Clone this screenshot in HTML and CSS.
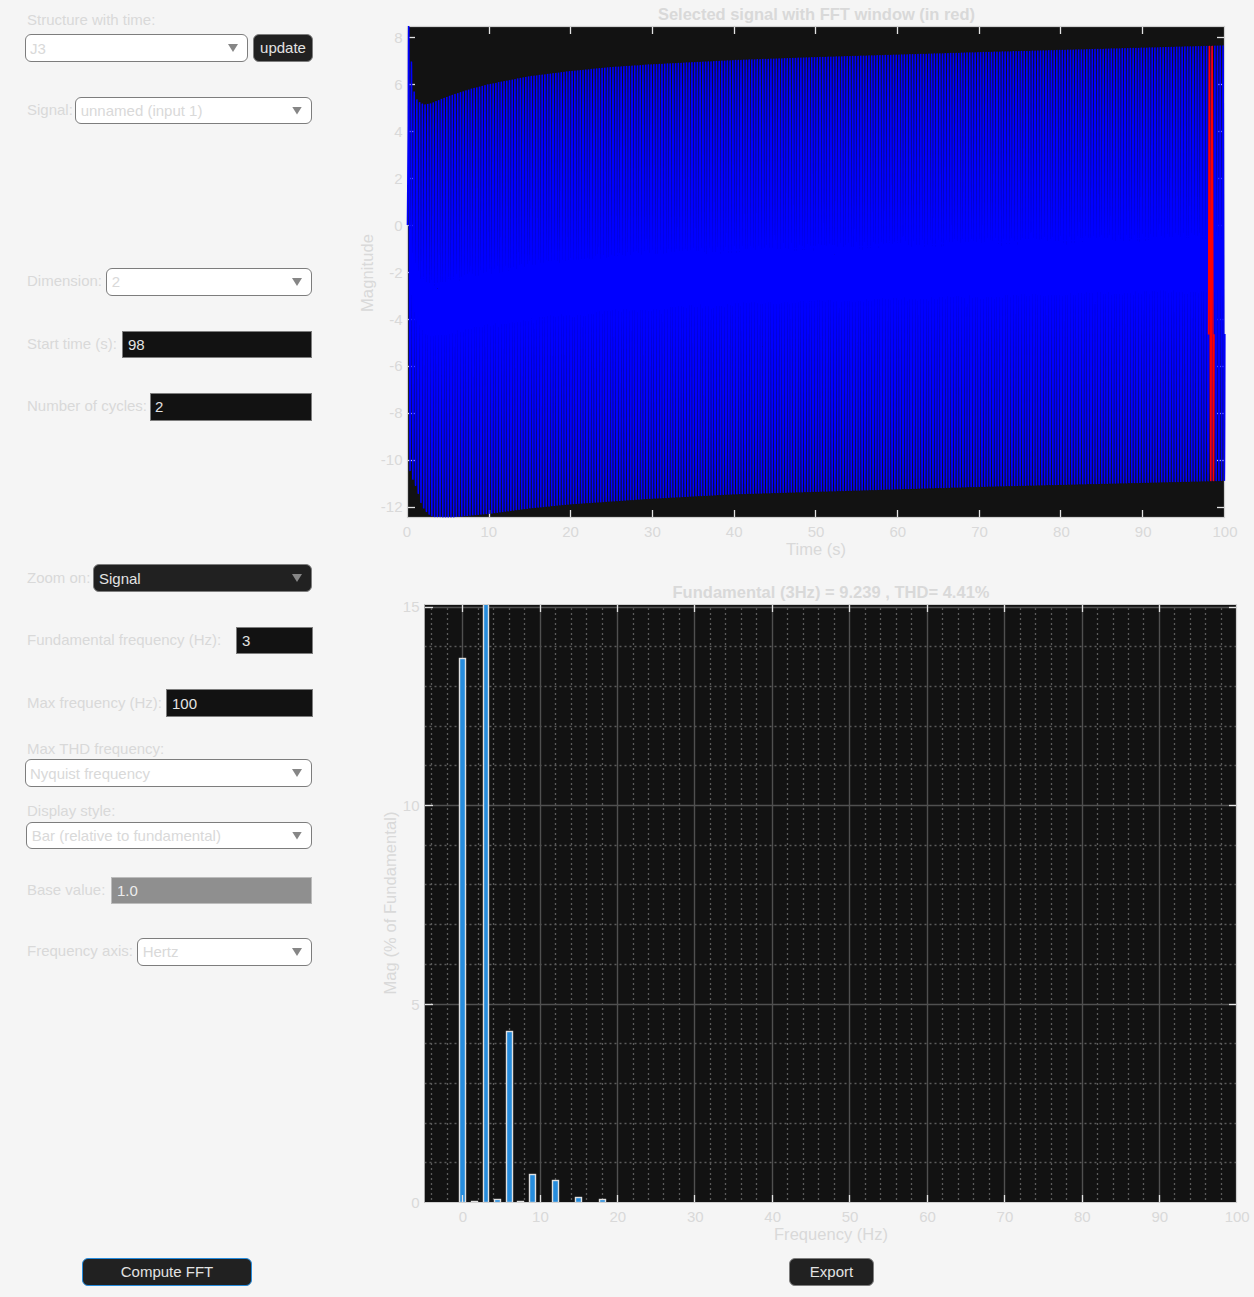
FILE: index.html
```html
<!DOCTYPE html>
<html lang="en">
<head>
<meta charset="utf-8">
<title>FFT Analysis</title>
<link rel="stylesheet" href="styles.css">
</head>
<body>
<div class="app">
  <form class="panel">
    <div class="caption caption-structure">Structure with time:</div>
    <div class="row row-structure">
      <div class="select"><span>J3</span><i class="arrow"></i></div>
      <button type="button" class="btn btn-update">update</button>
    </div>
    <div class="row row-signal"><label>Signal:</label><div class="select"><span>unnamed (input 1)</span><i class="arrow"></i></div></div>
    <div class="row row-dimension"><label>Dimension:</label><div class="select"><span>2</span><i class="arrow"></i></div></div>
    <div class="row row-start"><label>Start time (s):</label><div class="field">98</div></div>
    <div class="row row-cycles"><label>Number of cycles:</label><div class="field">2</div></div>
    <div class="row row-zoom"><label>Zoom on:</label><div class="select dark"><span>Signal</span><i class="arrow"></i></div></div>
    <div class="row row-fund wide"><label>Fundamental frequency (Hz):</label><div class="field">3</div></div>
    <div class="row row-max wide"><label>Max frequency (Hz):</label><div class="field">100</div></div>
    <div class="caption caption-thd">Max THD frequency:</div>
    <div class="row row-thd"><div class="select"><span>Nyquist frequency</span><i class="arrow"></i></div></div>
    <div class="caption caption-style">Display style:</div>
    <div class="row row-style"><div class="select"><span>Bar (relative to fundamental)</span><i class="arrow"></i></div></div>
    <div class="row row-base"><label>Base value:</label><div class="field disabled">1.0</div></div>
    <div class="row row-axis"><label>Frequency axis:</label><div class="select"><span>Hertz</span><i class="arrow"></i></div></div>
    <button type="button" class="btn btn-compute">Compute FFT</button>
  </form>
  <main class="plots">
    <svg class="plot" id="signal" width="914" height="570" viewBox="340 0 914 570"></svg>
    <svg class="plot" id="spectrum" width="914" height="688" viewBox="340 570 914 688"></svg>
    <button type="button" class="btn btn-export">Export</button>
  </main>
</div>
<script src="plots.js"></script>
</body>
</html>
```
FILE: styles.css
```css
* { box-sizing: border-box; }
body {
  margin: 0;
  background: #f5f5f5;
  font: 15px/18px "Liberation Sans", Arial, sans-serif;
  color: #d9d9d9;
}
.app {
  display: grid;
  grid-template-columns: 340px 914px;
  width: 1254px;
  height: 1297px;
  overflow: hidden;
}
.panel {
  display: flex;
  flex-direction: column;
  padding: 11px 28px 0 25px;
}
.caption { padding-left: 2px; height: 18px; white-space: nowrap; }
.row {
  display: flex;
  align-items: stretch;
  justify-content: space-between;
  width: 287px;
  height: 28px;
}
.row.wide { width: 288px; }
.row label { padding-left: 2px; line-height: 26px; white-space: nowrap; }
.select, .field {
  display: flex;
  align-items: center;
  border: 1px solid #7d7d7d;
  padding: 1px 9px 0 4.7px;
  white-space: nowrap;
}
.select { justify-content: space-between; background: #fff; border-radius: 6px; }
.select.dark { background: #212121; color: #e3e3e3; padding-left: 5px; }
.field { background: #121212; color: #e3e3e3; padding-left: 5px; }
.field.disabled { background: #8f8f8f; border-color: #bcbcbc; color: #ececec; }
.arrow {
  width: 10px;
  height: 8px;
  margin-bottom: 1px;
  background: #868686;
  clip-path: polygon(0 0, 100% 0, 50% 100%);
}
.btn {
  height: 28px;
  padding: 0;
  border: 1px solid #7d7d7d;
  border-radius: 6px;
  background: #212121;
  color: #e3e3e3;
  font: inherit;
}
.row-structure { margin-top: 5px; width: 288px; }
.row-structure .select { width: 223px; padding-left: 4px; }
.btn-update { width: 60px; }
.row-signal { margin-top: 35px; height: 27px; }
.row-signal .select { width: 237px; }
.row-dimension { margin-top: 144px; }
.row-dimension .select { width: 206px; }
.row-dimension span, .row-axis span { margin-bottom: 2px; }
.row-start { margin-top: 35px; height: 27px; }
.row-start .field { width: 190px; }
.row-cycles { margin-top: 35px; }
.row-cycles .field { width: 162px; padding: 0 0 1px 4px; }
.row-zoom { margin-top: 143px; }
.row-zoom .select { width: 219px; }
.row-zoom label, .row-max label { line-height: 28px; }
.row-fund { margin-top: 35px; height: 27px; }
.row-fund .field { width: 77px; }
.row-max { margin-top: 35px; }
.row-max .field { width: 147px; }
.caption-thd { margin-top: 23px; }
.row-thd { margin-top: 1px; }
.row-thd .select { width: 287px; padding-left: 4px; }
.caption-style { margin-top: 15px; }
.row-style { margin-top: 2px; height: 27px; justify-content: flex-end; }
.row-style .select { width: 286px; }
.row-base { margin-top: 28px; height: 27px; }
.row-base .field { width: 201px; }
.row-axis { margin-top: 34px; }
.row-axis .select { width: 175px; }
.btn-compute { width: 170px; margin: 292px 0 0 57px; border-color: #268cdd; }
.plots { display: flex; flex-direction: column; }
.plot { display: block; font-family: "Liberation Sans", Arial, sans-serif; }
.btn-export { width: 85px; margin-left: 449px; }
.face { fill: #121212; }
.box { fill: none; stroke: #d0d0d0; stroke-width: 1.2; }
.side { stroke: #a8a8a8; stroke-width: 1; }
.tick { stroke: #e3e3e3; stroke-width: 1.3; fill: none; }
.grid { stroke: #505050; stroke-width: 1.4; }
.minor { stroke: #5a5a5a; stroke-width: 1.3; stroke-dasharray: 2 3; }
.wave { fill: none; stroke: #00f; stroke-width: 1.45; stroke-linejoin: bevel; }
.wave.window { stroke: #f00; }
.bar { fill: #268cdd; stroke: #e0e0e0; stroke-width: 1.4; }
.num { font-size: 15px; fill: #d9d9d9; }
.axis { font-size: 16.5px; fill: #d9d9d9; }
.title { font-size: 16.5px; font-weight: bold; fill: #d9d9d9; }
.mid { text-anchor: middle; }
.end { text-anchor: end; }
```
FILE: plots.js
```js
const NS = "http://www.w3.org/2000/svg";

function add(parent, name, attrs, text) {
  const el = document.createElementNS(NS, name);
  for (const key in attrs) el.setAttribute(key, attrs[key]);
  if (text !== undefined) el.textContent = text;
  parent.appendChild(el);
  return el;
}
function line(parent, cls, x1, y1, x2, y2) {
  add(parent, "line", { class: cls, x1, y1, x2, y2 });
}
const snap = v => Math.floor(v) + 0.5;

function interpolate(points, x) {
  if (x <= points[0][0]) return points[0][1];
  for (let i = 1; i < points.length; i++) {
    const [x1, y1] = points[i];
    if (x <= x1) {
      const [x0, y0] = points[i - 1];
      return y0 + (y1 - y0) * (x - x0) / (x1 - x0);
    }
  }
  return points[points.length - 1][1];
}

/* Time-domain signal */
function drawSignal() {
  const svg = document.getElementById("signal");
  const L = 407.5, R = 1224.5, T = 26.5, B = 517.5;
  const clip = add(add(svg, "defs", {}), "clipPath", { id: "axes1" });
  add(clip, "rect", { x: 406, y: 26, width: 820, height: 492 });
  add(svg, "rect", { class: "face", x: L, y: T, width: R - L, height: B - T });
  add(svg, "rect", { class: "box", x: L, y: T, width: R - L, height: B - T });

  for (let v = 0; v <= 100; v += 10) {
    const x = snap(407.3 + v * 8.17);
    if (v > 0 && v < 100) {
      line(svg, "tick", x, 27, x, 34);
      line(svg, "tick", x, 510, x, 517);
    }
    add(svg, "text", { class: "num mid", x: 407 + v * 8.18, y: 537 }, v);
  }
  for (let v = 8; v >= -12; v -= 2) {
    const y = snap(225.5 - v * 23.48);
    line(svg, "tick", 408, y, 415, y);
    line(svg, "tick", 1217, y, 1224, y);
    add(svg, "text", { class: "num end", x: 402.5, y: y + (v < -5 ? 4.4 : 5) }, v);
  }

  const top = [[408.5, 22], [411.2, 58], [414, 90], [416.6, 98], [419.4, 101], [424, 103.5], [430, 102.5],
    [450, 94.5], [470, 88], [489, 83], [530, 75], [570, 70], [610, 66], [650, 63.3], [733, 59], [815, 56],
    [980, 51], [1225, 44.3]];
  const bottom = [[409.5, 470], [412, 479], [415, 485], [418, 494], [421, 504], [424, 510], [428, 515],
    [433, 518.2], [452, 518.5], [489, 515], [530, 509.5], [570, 505.5], [650, 500], [733, 495.5], [815, 493],
    [980, 488], [1225, 482]];
  const X0 = 407.9, SCALE = 8.17, PER = 28;
  const at = t => {
    const x = X0 + t * SCALE;
    const a = interpolate(top, x), b = interpolate(bottom, x);
    const y = (a + b) / 2 - (b - a) / 2 * Math.sin(6 * Math.PI * t - 0.33);
    return x.toFixed(2) + "," + y.toFixed(1);
  };
  const trace = (first, last, lead) => {
    const pts = lead ? [lead] : [];
    for (let i = Math.round(first * 3 * PER); i <= Math.round(last * 3 * PER); i++) pts.push(at(i / 3 / PER));
    return pts.join(" ");
  };
  const g = add(svg, "g", { "clip-path": "url(#axes1)" });
  add(g, "polyline", { class: "wave", points: trace(0.05, 100, "407.4,225") });
  add(g, "polyline", { class: "wave window", points: trace(98, 98.6667) });

  add(svg, "text", { class: "title mid", x: 816.5, y: 20, textLength: 317 }, "Selected signal with FFT window (in red)");
  add(svg, "text", { class: "axis mid", x: 816, y: 555, textLength: 60 }, "Time (s)");
  add(svg, "text", { class: "axis mid", transform: "translate(373 273) rotate(-90)", textLength: 78 }, "Magnitude");
}

/* Frequency spectrum */
function drawSpectrum() {
  const svg = document.getElementById("spectrum");
  const L = 424.5, R = 1236.5, T = 604.5, B = 1202.5;
  const px = v => 462.7 + v * 7.742, py = v => 1202.5 - v * 39.7;
  add(svg, "rect", { class: "face", x: L, y: T, width: R - L, height: B - T });
  for (let v = -4; v < 100; v += 2) {
    if (v % 10) line(svg, "minor", snap(px(v)), 1200, snap(px(v)), T);
  }
  for (let v = 1; v < 15; v++) {
    if (v % 5) line(svg, "minor", L, snap(py(v)), R, snap(py(v)));
  }
  for (let v = 0; v < 100; v += 10) line(svg, "grid", snap(px(v)), T, snap(px(v)), B);
  for (const v of [5, 10, 15]) line(svg, "grid", L, snap(py(v)), R, snap(py(v)));

  const clip = add(add(svg, "defs", {}), "clipPath", { id: "axes2" });
  add(clip, "rect", { x: 424, y: 604, width: 813, height: 599 });
  const g = add(svg, "g", { "clip-path": "url(#axes2)" });
  const bars = [[0, 13.7], [1.5, 0.03], [3, 100], [4.5, 0.08], [6, 4.31], [7.5, 0.03], [9, 0.7], [12, 0.55],
    [15, 0.13], [18, 0.07]];
  for (const [f, m] of bars) {
    const w = f === 3 ? 5 : 6;
    const y = snap(py(m));
    add(g, "rect", { class: "bar", x: snap(px(f) - w / 2), y, width: w, height: B - y });
  }
  line(svg, "box", 424, T, 1237, T);
  line(svg, "box", 424, B, 1237, B);
  line(svg, "side", L, T, L, B);
  line(svg, "box", R, T, R, B);

  for (let v = 0; v <= 100; v += 10) {
    const x = snap(px(v));
    if (v < 100) {
      line(svg, "tick", x, 605, x, 612);
      line(svg, "tick", x, 1195, x, 1202);
    }
    add(svg, "text", { class: "num mid", x: px(v) + 0.3, y: 1222 }, v);
  }
  for (const v of [0, 5, 10, 15]) {
    const y = snap(py(v));
    if (v) {
      line(svg, "tick", 425, y, 433, y);
      line(svg, "tick", 1229, y, 1236, y);
    }
    add(svg, "text", { class: "num end", x: 419.5, y: y + (v === 15 ? 4.5 : 5.3) }, v);
  }
  add(svg, "text", { class: "title mid", x: 831, y: 598, textLength: 317 }, "Fundamental (3Hz) = 9.239 , THD= 4.41%");
  add(svg, "text", { class: "axis mid", x: 831, y: 1240, textLength: 114 }, "Frequency (Hz)");
  add(svg, "text", { class: "axis mid", transform: "translate(395.7 903) rotate(-90)", textLength: 183 }, "Mag (% of Fundamental)");
}

drawSignal();
drawSpectrum();
```
